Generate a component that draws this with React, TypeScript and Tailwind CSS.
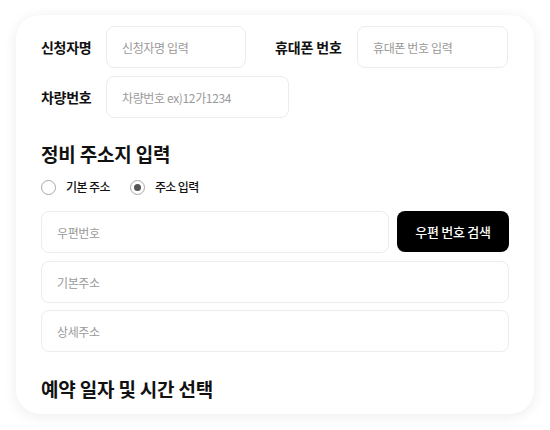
const font = { fontFamily: '"Noto Sans CJK KR", "Noto Sans", sans-serif' };

function Field({ placeholder, className = "" }: { placeholder: string; className?: string }) {
  return (
    <input
      placeholder={placeholder}
      className={`h-[42px] rounded-[8px] border border-[#ececec] bg-white px-[15px] text-[12px] tracking-[-0.03em] text-[#333] outline-none placeholder:text-[#9a9a9a] ${className}`}
    />
  );
}

function Radio({ label, checked }: { label: string; checked?: boolean }) {
  return (
    <label className="flex items-center gap-[10px]">
      <span className="flex h-[15px] w-[15px] items-center justify-center rounded-full border border-[#a8a8a8] bg-white">
        {checked && <span className="h-[7px] w-[7px] rounded-full bg-[#555]" />}
      </span>
      <span className="text-[12px] font-medium tracking-[-0.05em] text-[#111]">{label}</span>
    </label>
  );
}

export default function App() {
  return (
    <div className="h-[430px] w-[550px] bg-white pl-[16px] pt-[15px]" style={font}>
      <div className="h-[399px] w-[518px] rounded-[24px] bg-white pl-[25px] pr-[25px] pt-[11px] shadow-[0_2px_14px_rgba(0,0,0,0.08)]">
        <div className="flex items-center">
          <span className="w-[65px] text-[14px] font-semibold tracking-[-0.02em] text-[#111]">신청자명</span>
          <Field placeholder="신청자명 입력" className="w-[140px]" />
          <span className="ml-[29px] w-[82px] text-[14px] font-semibold tracking-[-0.01em] text-[#111]">휴대폰 번호</span>
          <Field placeholder="휴대폰 번호 입력" className="w-[151px]" />
        </div>
        <div className="mt-[8px] flex items-center">
          <span className="w-[65px] text-[14px] font-semibold tracking-[-0.02em] text-[#111]">차량번호</span>
          <Field placeholder="차량번호 ex)12가1234" className="w-[183px]" />
        </div>

        <h2 className="mt-[23px] text-[19px] font-bold leading-[26px] tracking-[-0.01em] text-[#111]">정비 주소지 입력</h2>
        <div className="mt-[11px] flex items-center gap-[20px]">
          <Radio label="기본 주소" />
          <Radio label="주소 입력" checked />
        </div>

        <div className="mt-[15px] flex gap-[8px]">
          <Field placeholder="우편번호" className="flex-1" />
          <button className="h-[41px] w-[112px] rounded-[8px] bg-black text-[13px] font-medium tracking-[-0.02em] text-white">
            우편 번호 검색
          </button>
        </div>
        <Field placeholder="기본주소" className="mt-[8px] w-full" />
        <Field placeholder="상세주소" className="mt-[7px] w-full" />

        <h2 className="mt-[24px] text-[19px] font-bold leading-[26px] tracking-[-0.01em] text-[#111]">예약 일자 및 시간 선택</h2>
      </div>
    </div>
  );
}
